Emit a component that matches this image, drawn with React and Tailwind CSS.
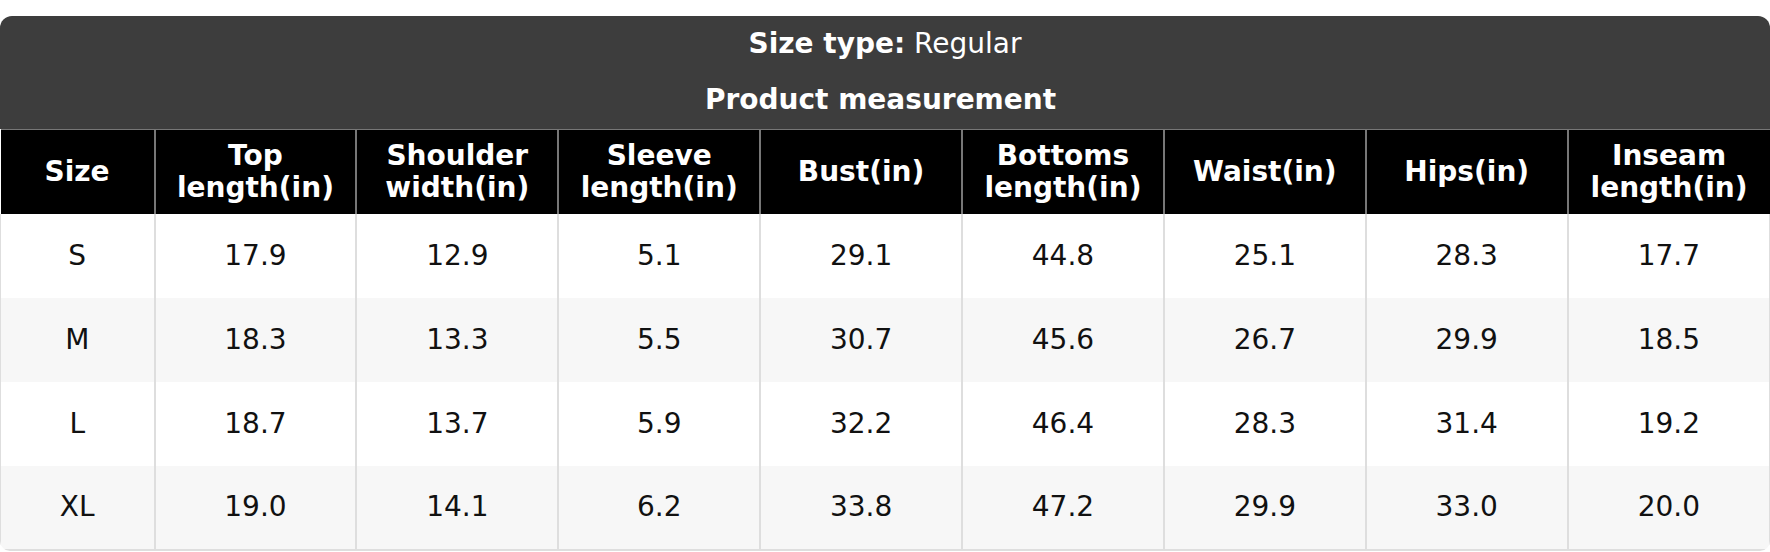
const headers = [
    ["Size"],
    ["Top", "length(in)"],
    ["Shoulder", "width(in)"],
    ["Sleeve", "length(in)"],
    ["Bust(in)"],
    ["Bottoms", "length(in)"],
    ["Waist(in)"],
    ["Hips(in)"],
    ["Inseam", "length(in)"],
];

const rows = [
    ["S", "17.9", "12.9", "5.1", "29.1", "44.8", "25.1", "28.3", "17.7"],
    ["M", "18.3", "13.3", "5.5", "30.7", "45.6", "26.7", "29.9", "18.5"],
    ["L", "18.7", "13.7", "5.9", "32.2", "46.4", "28.3", "31.4", "19.2"],
    ["XL", "19.0", "14.1", "6.2", "33.8", "47.2", "29.9", "33.0", "20.0"],
];

const SizeTable = () => {
    return <div className="w-[1770px] pt-4 bg-white" style={{fontFamily: '"DejaVu Sans", "Liberation Sans", sans-serif'}}>
        <div className="rounded-t-[12px] rounded-b-[10px] overflow-hidden">
            <div className="bg-[#3d3d3d] text-white text-center text-[28px] leading-[32px] pt-[12px] pb-[13px]">
                <div><span className="font-bold">Size type:</span> Regular</div>
                <div className="mt-[24px] pr-[9px] font-bold">Product measurement</div>
            </div>
            <table className="w-full table-fixed border-collapse text-[28px] leading-[32px]">
                <colgroup>
                    <col className="w-[154px]"/>
                    {headers.slice(1).map((h, i) => <col key={i}/>)}
                </colgroup>
                <thead>
                <tr className="bg-black text-white border-t border-[#777]">
                    {headers.map((h, i) => (
                        <th key={i}
                            className={"h-[84px] p-0 font-bold text-center align-middle " + (i > 0 ? "border-l-2 border-[#777]" : "")}>
                            {h.map((line, j) => <div key={j}>{line}</div>)}
                        </th>
                    ))}
                </tr>
                </thead>
                <tbody>
                {rows.map((row, r) => (
                    <tr key={r} className={r % 2 === 1 ? "bg-[#f7f7f7]" : "bg-white"}>
                        {row.map((cell, c) => (
                            <td key={c}
                                className={"h-[84px] p-0 text-center align-middle text-[#111] " +
                                    (c > 0 ? "border-l-2 border-[#dedede] " : "border-l border-[#dedede] ") +
                                    (c === row.length - 1 ? "border-r border-[#dedede] " : "") +
                                    (r === rows.length - 1 ? "border-b-2 border-b-[#dedede]" : "")}>
                                {cell}
                            </td>
                        ))}
                    </tr>
                ))}
                </tbody>
            </table>
        </div>
    </div>
}

export default function App() {
    return <SizeTable/>;
}
